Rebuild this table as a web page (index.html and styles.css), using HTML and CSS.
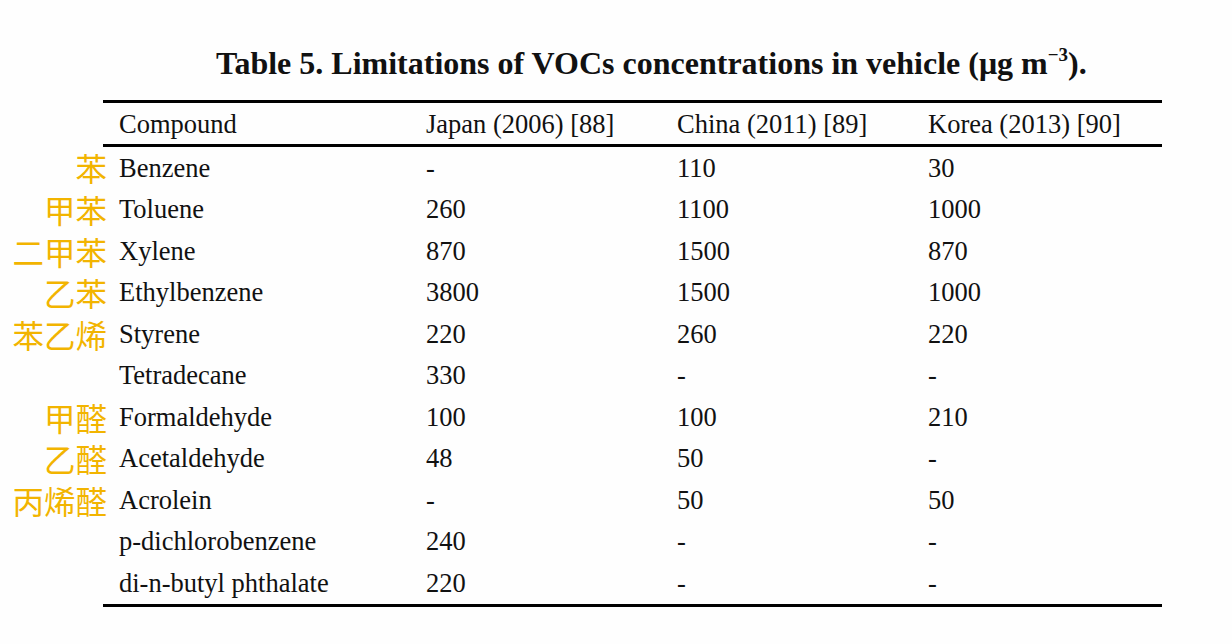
FILE: index.html
```html
<!DOCTYPE html>
<html lang="en">
<head>
<meta charset="utf-8">
<title>Table 5</title>
<link rel="stylesheet" href="styles.css">
</head>
<body>
<div class="page">
  <h1 class="title">Table 5. Limitations of VOCs concentrations in vehicle (μg m<sup>−3</sup>).</h1>
  <table class="voc">
    <thead>
      <tr>
        <th class="zh"></th>
        <th class="c1">Compound</th>
        <th>Japan (2006) [88]</th>
        <th>China (2011) [89]</th>
        <th class="last">Korea (2013) [90]</th>
      </tr>
    </thead>
    <tbody>
      <tr><td class="zh"><span>苯</span></td><td class="c1">Benzene</td><td>-</td><td>110</td><td>30</td></tr>
      <tr><td class="zh"><span>甲苯</span></td><td class="c1">Toluene</td><td>260</td><td>1100</td><td>1000</td></tr>
      <tr><td class="zh"><span>二甲苯</span></td><td class="c1">Xylene</td><td>870</td><td>1500</td><td>870</td></tr>
      <tr><td class="zh"><span>乙苯</span></td><td class="c1">Ethylbenzene</td><td>3800</td><td>1500</td><td>1000</td></tr>
      <tr><td class="zh"><span>苯乙烯</span></td><td class="c1">Styrene</td><td>220</td><td>260</td><td>220</td></tr>
      <tr><td class="zh"></td><td class="c1">Tetradecane</td><td>330</td><td>-</td><td>-</td></tr>
      <tr><td class="zh"><span>甲醛</span></td><td class="c1">Formaldehyde</td><td>100</td><td>100</td><td>210</td></tr>
      <tr><td class="zh"><span>乙醛</span></td><td class="c1">Acetaldehyde</td><td>48</td><td>50</td><td>-</td></tr>
      <tr><td class="zh"><span>丙烯醛</span></td><td class="c1">Acrolein</td><td>-</td><td>50</td><td>50</td></tr>
      <tr><td class="zh"></td><td class="c1">p-dichlorobenzene</td><td>240</td><td>-</td><td>-</td></tr>
      <tr><td class="zh"></td><td class="c1">di-n-butyl phthalate</td><td>220</td><td>-</td><td>-</td></tr>
    </tbody>
  </table>
</div>
</body>
</html>
```

FILE: styles.css
```css
html, body {
  margin: 0;
  padding: 0;
  background: #fefefe;
}
.page {
  width: 1232px;
  height: 644px;
  padding-top: 42px;
  box-sizing: border-box;
  font-family: "Liberation Serif", "Times New Roman", serif;
  color: #111;
}
.title {
  margin: 0 0 16px 0;
  padding-left: 216px;
  font-size: 32px;
  line-height: 42px;
  font-weight: bold;
  white-space: nowrap;
  letter-spacing: 0;
}
.title sup {
  font-size: 19px;
  line-height: 0;
  vertical-align: 13px;
}
.voc {
  border-collapse: collapse;
  font-size: 26.5px;
  line-height: 30px;
}
.voc th, .voc td {
  padding: 0;
  text-align: left;
  font-weight: normal;
  white-space: nowrap;
  vertical-align: middle;
}
.voc thead th {
  height: 41px;
  border-top: 3px solid #000;
  border-bottom: 3px solid #000;
}
.voc tbody td {
  height: 41.5px;
}
.voc tbody tr:last-child td {
  border-bottom: 3px solid #000;
}
.voc .zh,
.voc thead th.zh,
.voc tbody tr:last-child td.zh {
  border: none;
  width: 103px;
  padding: 0;
  text-align: right;
  color: #f2b400;
  font-family: "Noto Sans CJK SC", sans-serif;
  font-weight: 400;
  font-size: 31.5px;
  line-height: 30px;
}
.voc .zh span {
  display: inline-block;
  margin-right: -4px;
}
.voc .c1 {
  width: 307px;
  padding-left: 16px;
}
.voc th:nth-child(3), .voc td:nth-child(3) { width: 251px; }
.voc th:nth-child(4), .voc td:nth-child(4) { width: 251px; }
.voc th:nth-child(5), .voc td:nth-child(5) { width: 234px; }
```
